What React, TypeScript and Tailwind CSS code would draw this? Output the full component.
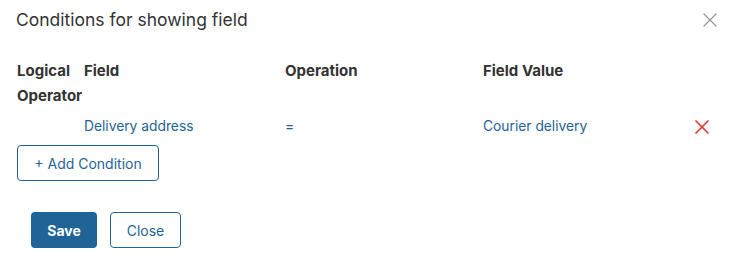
import { X } from "lucide-react";

const COLUMNS = ["Field", "Operation", "Field Value"];

export default function App() {
  return (
    <div
      className="w-[734px] h-[253px] bg-white text-[#333] relative"
      style={{ fontFamily: "Inter, 'Noto Sans', sans-serif" }}
    >
      <div className="flex items-start justify-between pl-4 pr-[12px] pt-[8px]">
        <h1 className="text-[17.5px] leading-[24px] text-[#333]">Conditions for showing field</h1>
        <button className="text-[#9a9a9a]">
          <X size={24} strokeWidth={1.3} />
        </button>
      </div>

      <div className="pl-[17px] pr-4 mt-[26px]">
        <div className="grid grid-cols-[67px_201px_198px_1fr_40px] text-[15px] leading-[25px] font-bold text-[#333]">
          <div>
            Logical
            <br />
            Operator
          </div>
          {COLUMNS.map((c) => (
            <div key={c}>{c}</div>
          ))}
          <div />
        </div>

        <div className="grid grid-cols-[67px_201px_198px_1fr_40px] items-center text-[13.8px] leading-[25px] text-[#1f6397] mt-[6px]">
          <div />
          <div>Delivery address</div>
          <div>=</div>
          <div>Courier delivery</div>
          <div className="flex pl-[12px] text-[#e53935]">
            <X size={24} strokeWidth={1.7} />
          </div>
        </div>

        <button className="mt-[6px] h-[36px] w-[142px] rounded-[4px] border border-[#1f6397] text-[14px] text-[#1f6397]">
          + Add Condition
        </button>

        <div className="flex gap-[13px] pl-[14px] mt-[31px]">
          <button className="h-[36px] w-[66px] rounded-[4px] bg-[#1f6397] text-[14px] font-bold text-white">
            Save
          </button>
          <button className="h-[36px] w-[71px] rounded-[4px] border border-[#1f6397] text-[14px] text-[#1f6397]">
            Close
          </button>
        </div>
      </div>
    </div>
  );
}
